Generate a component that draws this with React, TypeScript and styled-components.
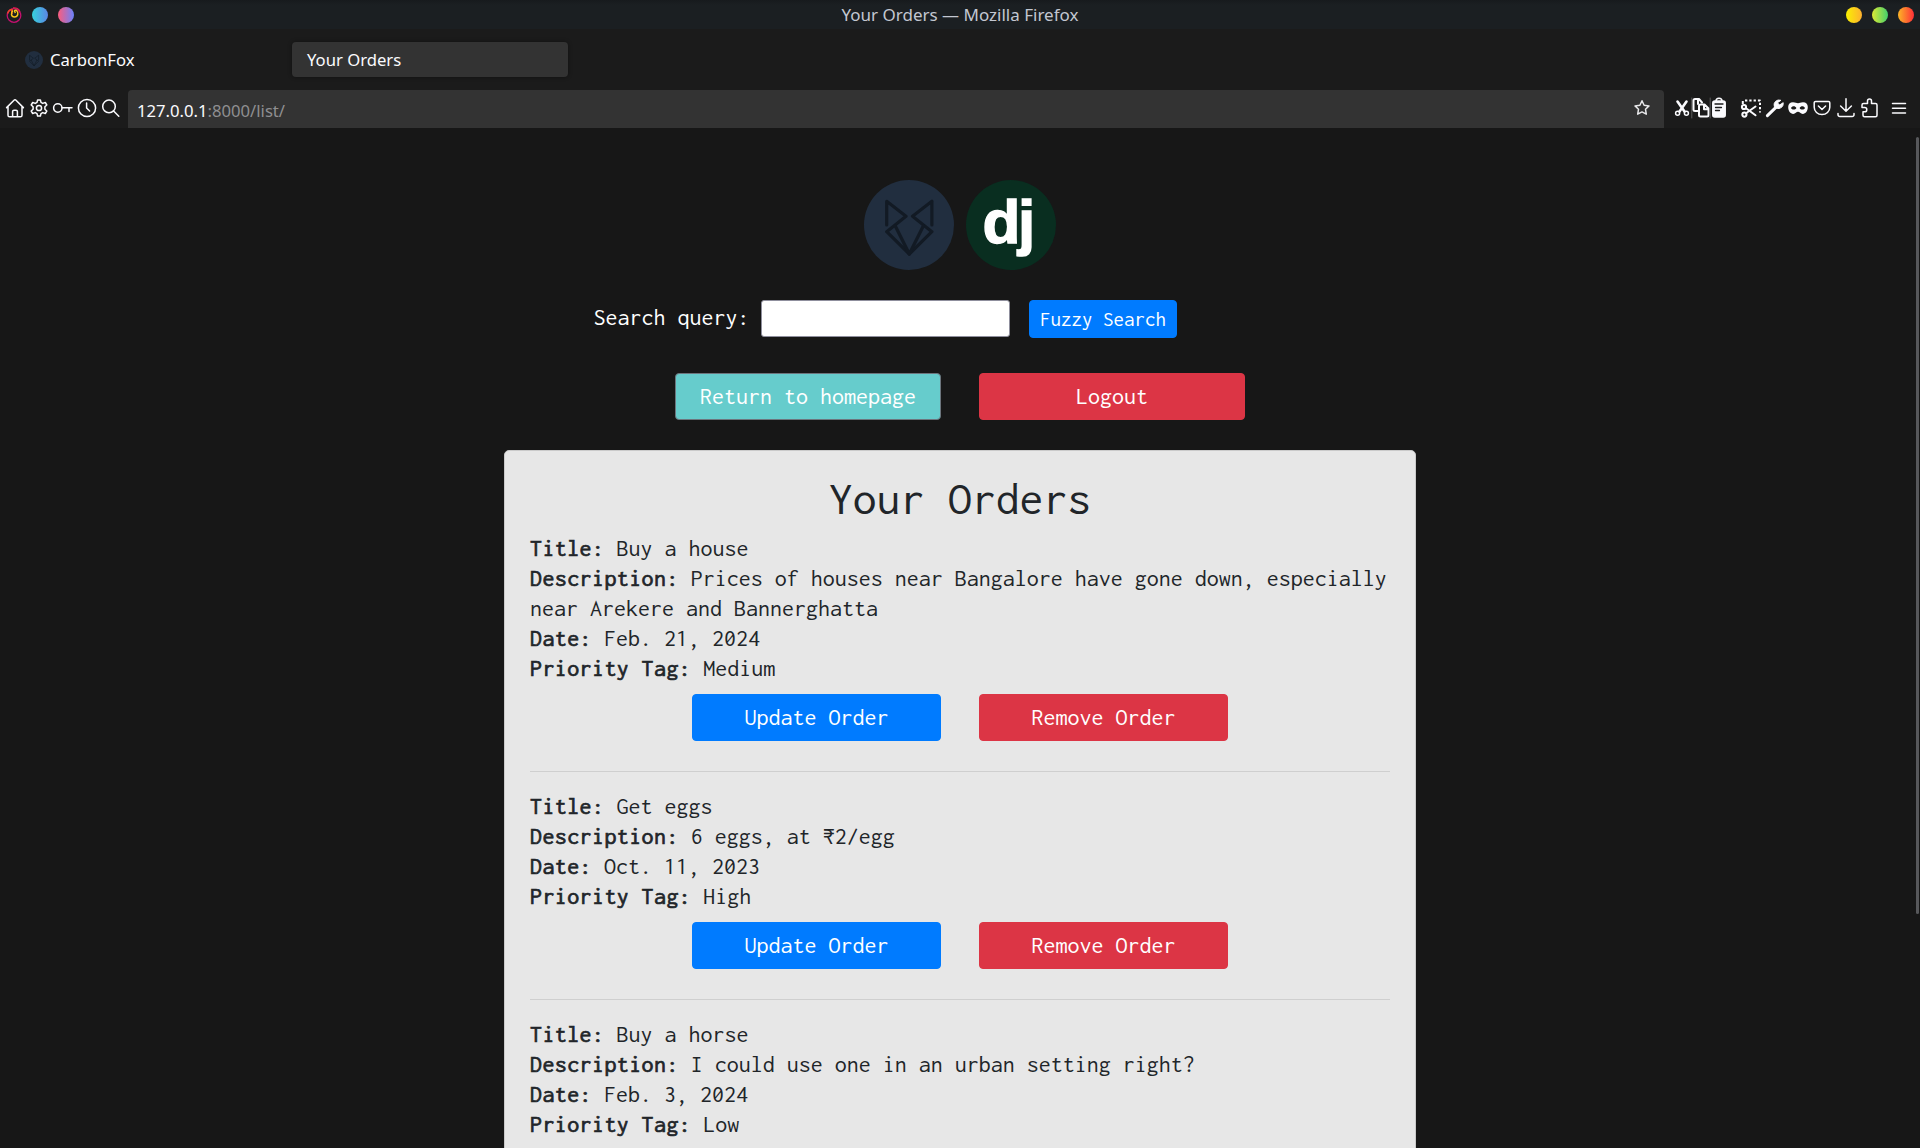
import React from 'react';
import styled, { createGlobalStyle } from 'styled-components';

const UI = '"Noto Sans", "Open Sans", sans-serif';
const MONO = 'Inconsolata, "Noto Sans Mono CJK SC", "Liberation Mono", monospace';

const Global = createGlobalStyle`
  *, *::before, *::after { box-sizing: border-box; }
  html, body { margin: 0; padding: 0; background: #171717; overflow: hidden; }
`;

const Window = styled.div`
  display: flex;
  flex-direction: column;
  width: 1920px;
  height: 1148px;
  overflow: hidden;
  background: #171717;
`;

const TitleBar = styled.header`
  display: grid;
  grid-template-columns: 1fr auto 1fr;
  align-items: center;
  height: 29px;
  padding: 0 6px;
  background: linear-gradient(#171a1d, #1b1f22 5px);
  flex: none;
`;

const TitleText = styled.div`
  font: 400 17px/28px ${UI};
  color: #c3c7d1;
  white-space: pre;
`;

const Dots = styled.div<{ $end?: boolean }>`
  display: flex;
  gap: 10px;
  justify-content: ${p => (p.$end ? 'flex-end' : 'flex-start')};
`;

const Dot = styled.span<{ $from: string; $to: string }>`
  width: 16px;
  height: 16px;
  border-radius: 50%;
  background: linear-gradient(90deg, ${p => p.$from}, ${p => p.$to});
`;

const TabStrip = styled.nav`
  display: flex;
  align-items: center;
  height: 61px;
  padding: 0 0 0 12px;
  background: #1b1b1b;
  flex: none;
`;

const Tab = styled.div<{ $active?: boolean }>`
  display: flex;
  align-items: center;
  gap: 7px;
  width: ${p => (p.$active ? 276 : 280)}px;
  height: 35px;
  padding: 0 ${p => (p.$active ? 15 : 13)}px;
  border-radius: 4px;
  background: ${p => (p.$active ? '#333333' : 'transparent')};
  box-shadow: ${p => (p.$active ? '0 0 4px rgba(0, 0, 0, 0.4)' : 'none')};
  font: 400 16.67px/35px ${UI};
  color: #fbfbfe;
`;

const Toolbar = styled.div`
  display: flex;
  height: 38px;
  padding-left: 3px;
  background: #1b1b1b;
  color: #fbfbfe;
  flex: none;
`;

const IconRow = styled.div<{ $pitch: number; $ml?: number }>`
  display: grid;
  grid-auto-flow: column;
  grid-auto-columns: ${p => p.$pitch}px;
  justify-items: center;
  align-items: center;
  height: 36px;
  margin-left: ${p => p.$ml || 0}px;
`;

const Glyph = styled.svg`
  display: block;
  width: 24px;
  height: 24px;
  overflow: visible;
  fill: none;
  stroke: currentColor;
  stroke-width: 1.5;
  stroke-linecap: round;
  stroke-linejoin: round;
`;

const UrlBar = styled.div`
  display: flex;
  align-items: center;
  justify-content: space-between;
  width: 1536px;
  height: 38px;
  margin-left: 5.5px;
  padding: 0 10px 0 9px;
  border-radius: 4px 4px 0 0;
  background: #333333;
  color: #e8e8ea;
  flex: none;
`;

const Url = styled.div`
  padding-top: 3px;
  font: 400 16.67px/33px ${UI};
  color: #fbfbfe;
  span { color: #8f8f91; }
`;

const StarSlot = styled.div`
  display: flex;
  height: 35px;
  align-self: flex-start;
  align-items: center;
`;

const Page = styled.main`
  display: grid;
  grid-template-columns: 1fr 912px 1fr;
  flex: 1;
  min-height: 0;
  font-family: ${MONO};
  font-size: 24px;
  line-height: 30px;
`;

const Content = styled.div`
  grid-column: 2;
  display: flex;
  flex-direction: column;
  align-items: center;
  padding-top: 52px;
`;

const ScrollTrack = styled.div`
  display: flex;
  justify-content: flex-end;
  padding: 9px 1px 0 0;
`;

const ScrollThumb = styled.div`
  width: 3px;
  height: 777px;
  border-radius: 2px;
  background: #57585b;
`;

const Logos = styled.div`
  display: flex;
  gap: 12px;
  height: 90px;
`;

const LogoSvg = styled.svg<{ $size: number }>`
  display: block;
  width: ${p => p.$size}px;
  height: ${p => p.$size}px;
  flex: none;
`;

const SearchForm = styled.form`
  display: flex;
  align-items: flex-start;
  align-self: flex-start;
  height: 38px;
  margin: 30px 0 0 89px;
`;

const Label = styled.label`
  width: 168px;
  padding: 2px 0 0 0.5px;
  color: #ffffff;
`;

const SearchInput = styled.input`
  width: 249px;
  height: 37px;
  margin-right: 19px;
  padding: 0 6px;
  border: 1px solid #8f8f9d;
  border-radius: 3px;
  background: #ffffff;
  font: inherit;
`;

const tones = {
  blue: ['#007bff', '#007bff'],
  red: ['#dc3545', '#dc3545'],
  teal: ['#66cccc', '#6c757d'],
};

const Button = styled.button<{ $tone: keyof typeof tones; $width: number; $small?: boolean }>`
  display: flex;
  align-items: center;
  justify-content: center;
  width: ${p => p.$width}px;
  height: ${p => (p.$small ? 38 : 47)}px;
  padding: 0 0 ${p => (p.$small ? 1 : 2)}px;
  border: 1px solid ${p => tones[p.$tone][1]};
  border-radius: 4px;
  background: ${p => tones[p.$tone][0]};
  color: #ffffff;
  font-family: ${MONO};
  font-size: ${p => (p.$small ? 21 : 24)}px;
  line-height: 30px;
`;

const ButtonRow = styled.div<{ $mt: number }>`
  display: flex;
  justify-content: center;
  gap: 38px;
  margin-top: ${p => p.$mt}px;
`;

const Card = styled.section`
  width: 912px;
  height: 760px;
  margin-top: 30px;
  padding: 24px 25px;
  border: 1px solid #cacaca;
  border-radius: 5px;
  background: #e7e7e7;
  color: #212529;
  flex: none;
`;

const Heading = styled.h1`
  margin: 0 0 12px;
  font-size: 47.7px;
  font-weight: 400;
  line-height: 46px;
  text-align: center;
`;

const Order = styled.article`
  & + & {
    margin-top: 30px;
    padding-top: 19px;
    border-top: 1px solid #cfcfcf;
  }
`;

const Field = styled.div`
  strong {
    font-weight: 400;
    letter-spacing: 0.4px;
    -webkit-text-stroke: 0.7px currentColor;
  }
`;

const HomeIcon = () => (
  <Glyph viewBox="0 0 24 24"><path d="M3.6 11.6 11 4.2a1.4 1.4 0 0 1 2 0l7.4 7.4M5 10.8v8.4a1.6 1.6 0 0 0 1.6 1.6h10.8a1.6 1.6 0 0 0 1.6-1.6v-8.4M9.6 20.6v-5a1.4 1.4 0 0 1 1.4-1.4h2a1.4 1.4 0 0 1 1.4 1.4v5" /></Glyph>
);
const GearIcon = () => (
  <Glyph viewBox="0 0 24 24">
    <path d="M10.6 4h2.8l.6 2.4 1.7 1 2.6-.9 1.5 2.5-1.9 1.8v2.4l1.9 1.8-1.5 2.5-2.6-.9-1.7 1-.6 2.4h-2.8l-.6-2.4-1.7-1-2.6.9-1.5-2.5 1.9-1.8v-2.4L4.2 9l1.5-2.5 2.6.9 1.7-1z" />
    <circle cx="12" cy="12" r="2.6" />
  </Glyph>
);
const KeyIcon = () => (
  <Glyph viewBox="0 0 24 24"><circle cx="6.8" cy="12" r="4.2" /><path d="M11 11.7h10M18 12v3.6" /></Glyph>
);
const ClockIcon = () => (
  <Glyph viewBox="0 0 24 24"><circle cx="12" cy="12" r="8.6" /><path d="M11.6 7v5l3 3" /></Glyph>
);
const SearchIcon = () => (
  <Glyph viewBox="0 0 24 24"><circle cx="10" cy="10.4" r="6.3" /><path d="m14.6 15 5.2 5.2" /></Glyph>
);
const StarIcon = () => (
  <Glyph viewBox="0 0 24 24" strokeWidth={1.3}>
    <path d="m12 4.8 2.1 4.4 4.9.7-3.5 3.4.8 4.9-4.3-2.3-4.3 2.3.8-4.9L5 9.9l4.9-.7z" />
  </Glyph>
);
const CutIcon = () => (
  <Glyph viewBox="0 0 24 24">
    <g strokeWidth="2.6"><path d="m7.5 5.5 7 10M16.5 5.5l-7 10" /></g>
    <circle cx="7.6" cy="17.2" r="2" /><circle cx="16.4" cy="17.2" r="2" />
  </Glyph>
);
const CopyIcon = () => (
  <Glyph viewBox="0 0 24 24">
    <path d="M2.8 2v20" stroke="#5b5b5b" strokeWidth="1" />
    <g strokeWidth="2">
      <path d="M9 15H6a1.5 1.5 0 0 1-1.5-1.5v-9A1.500 1.5 0 0 1 6 3h4l3 3.500M9 4v4" />
      <path d="M11.5 8.500h4l4 4V19a1.500 1.500 0 0 1-1.500 1.500h-6.500A1.500 1.500 0 0 1 10 19v-9a1.500 1.500 0 0 1 1.500-1.500zM15 9v4.200h4" />
    </g>
  </Glyph>
);
const PasteIcon = () => (
  <Glyph viewBox="0 0 24 24">
    <path d="M3.2 2v20" stroke="#5b5b5b" strokeWidth="1" />
    <rect x="5.8" y="5" width="12.4" height="16" rx="2" fill="currentColor" />
    <path d="M9 5.200a3 3 0 0 1 6 0" />
    <path d="M8 8h8M8.500 11.500h6M8.500 14.500h4" stroke="#1b1b1b" strokeWidth="1.3" />
  </Glyph>
);
const ShotIcon = () => (
  <Glyph viewBox="0 0 24 24">
    <path d="M6 4.500h15v12" strokeWidth="2" strokeDasharray="2.3 2" strokeLinecap="butt" />
    <path d="M3.800 5v3" strokeWidth="2" strokeLinecap="butt" />
    <g strokeWidth="2"><circle cx="5" cy="11" r="2.1" /><circle cx="5.4" cy="18.6" r="2.1" /><path d="m7 17.200 9.500-6.700M7 12.300l9.500 7" /></g>
  </Glyph>
);
const WrenchIcon = () => (
  <Glyph viewBox="0 0 24 24">
    <path d="m4.400 19.600 8.500-8.200" strokeWidth="3" />
    <path d="M17.600 4.200a5 5 0 0 0-6.300 6.300 5 5 0 0 0 8.700-1.200l.2-2.600-3.600 2.300-2-2z" fill="currentColor" strokeWidth="1" />
  </Glyph>
);
const MaskIcon = () => (
  <Glyph viewBox="0 0 24 24">
    <path fill="currentColor" stroke="none" fillRule="evenodd" d="M7 6.200c2.400 0 3.500 1 5 1s2.600-1 5-1c3 0 4.800 1.900 4.800 4.800 0 3.900-2.200 6.900-5 6.900-2.200 0-3.200-2.200-4.800-2.200s-2.600 2.200-4.800 2.200c-2.800 0-5-3-5-6.900 0-2.900 1.800-4.800 4.800-4.800zM5 12c1 2 4.400 2 5.400 0-1.200-2.200-4.200-2.200-5.400 0zm8.600 0c1 2 4.400 2 5.400 0-1.200-2.200-4.200-2.200-5.400 0z" />
  </Glyph>
);
const PocketIcon = () => (
  <Glyph viewBox="0 0 24 24"><path d="M5.600 5.400h12.800a1.400 1.400 0 0 1 1.400 1.400v4.400a7.800 7.400 0 0 1-15.600 0V6.800a1.400 1.400 0 0 1 1.400-1.400zM8.400 10l3.600 3.500 3.600-3.500" /></Glyph>
);
const DownloadIcon = () => (
  <Glyph viewBox="0 0 24 24"><path d="M12 2.800v12M6.600 10l5.400 5.200 5.400-5.200M4 17.400v1.400A1.800 1.800 0 0 0 5.800 20.600h12.400a1.800 1.800 0 0 0 1.800-1.800v-1.400" /></Glyph>
);
const PuzzleIcon = () => (
  <Glyph viewBox="0 0 24 24"><path d="M6.500 7.500h4V5a2 2 0 0 1 4 0v2.500h4A1.500 1.500 0 0 1 20 9v10.300a1.500 1.500 0 0 1-1.500 1.500h-11A1.500 1.500 0 0 1 6 19.300v-3.500h1.700a2 2 0 0 0 0-4.200H5V9a1.500 1.500 0 0 1 1.500-1.500z" /></Glyph>
);
const MenuIcon = () => (
  <Glyph viewBox="0 0 24 24" strokeLinecap="butt"><path d="M5.500 7.500h13M5.500 12.300h13M5.500 17h13" /></Glyph>
);

const FoxLogo = ({ size }: { size: number }) => (
  <LogoSvg $size={size} viewBox="0 0 90 90">
    <circle cx="45" cy="45" r="45" fill="#212e3f" />
    <g fill="none" stroke="#121a24" strokeWidth="3.2" strokeLinecap="round" strokeLinejoin="round">
      <path d="M22.700 45V21.300l19.300 15-19.300 15.400L45.300 74l22.600-22.300-19.400-15.400 19.400-15V45" />
      <path d="m31.300 46 14 28 14-28" />
    </g>
  </LogoSvg>
);

const DjangoLogo = () => (
  <LogoSvg $size={90} viewBox="0 0 90 90">
    <circle cx="45" cy="45" r="45" fill="#092e20" />
    <g fill="#ffffff" stroke="#ffffff" strokeWidth="1.4" fontFamily='"Liberation Sans", Arial, sans-serif' fontWeight="700" fontSize="62">
      <text x="16.5 52" y="63">dj</text>
    </g>
  </LogoSvg>
);

const FirefoxMark = () => (
  <LogoSvg $size={16} viewBox="0 0 16 16">
    <circle cx="8" cy="8.5" r="6.8" fill="none" stroke="#c4106f" strokeWidth="1.3" />
    <path d="M1.600 6.500C2.500 3 5 2.300 6 2.500 5 4 6.500 5.500 6 7" fill="none" stroke="#f0442c" strokeWidth="1.5" />
    <path d="M7 3.500C4.500 6 5 10 8.500 10S13 5.500 10.500 3.500C8.500 2.500 8 4 9.500 6" fill="none" stroke="#f8c51c" strokeWidth="1.5" />
    <path d="M7 1c3-.6 6 1 7 4" fill="none" stroke="#e01f4f" strokeWidth="1.3" />
  </LogoSvg>
);

const orders = [
  { title: 'Buy a house', description: 'Prices of houses near Bangalore have gone down, especially near Arekere and Bannerghatta', date: 'Feb. 21, 2024', tag: 'Medium', actions: true },
  { title: 'Get eggs', description: '6 eggs, at ₹2/egg', date: 'Oct. 11, 2023', tag: 'High', actions: true },
  { title: 'Buy a horse', description: 'I could use one in an urban setting right?', date: 'Feb. 3, 2024', tag: 'Low', actions: false },
];

export default function App() {
  return (
    <Window>
      <Global />
      <TitleBar>
        <Dots>
          <FirefoxMark />
          <Dot $from="#36d1dc" $to="#5b86e5" />
          <Dot $from="#fc5c7d" $to="#6a82fb" />
        </Dots>
        <TitleText>Your Orders — Mozilla Firefox</TitleText>
        <Dots $end>
          <Dot $from="#f9f002" $to="#feb02f" />
          <Dot $from="#dcea35" $to="#43cf6c" />
          <Dot $from="#fcb526" $to="#ff2f38" />
        </Dots>
      </TitleBar>
      <TabStrip>
        <Tab><FoxLogo size={18} />CarbonFox</Tab>
        <Tab $active>Your Orders</Tab>
      </TabStrip>
      <Toolbar>
        <IconRow $pitch={23.9}>
          <HomeIcon /><GearIcon /><KeyIcon /><ClockIcon /><SearchIcon />
        </IconRow>
        <UrlBar>
          <Url>127.0.0.1<span>:8000/list/</span></Url>
          <StarSlot><StarIcon /></StarSlot>
        </UrlBar>
        <IconRow $pitch={18.5} $ml={9}>
          <CutIcon /><CopyIcon /><PasteIcon />
        </IconRow>
        <IconRow $pitch={23.6} $ml={11}>
          <ShotIcon /><WrenchIcon /><MaskIcon /><PocketIcon /><DownloadIcon /><PuzzleIcon />
        </IconRow>
        <IconRow $pitch={24} $ml={5.6}><MenuIcon /></IconRow>
      </Toolbar>
      <Page>
        <Content>
          <Logos><FoxLogo size={90} /><DjangoLogo /></Logos>
          <SearchForm>
            <Label htmlFor="query">Search query:</Label>
            <SearchInput id="query" />
            <Button type="button" $tone="blue" $width={148} $small>Fuzzy Search</Button>
          </SearchForm>
          <ButtonRow $mt={35}>
            <Button $tone="teal" $width={266}>Return to homepage</Button>
            <Button $tone="red" $width={266}>Logout</Button>
          </ButtonRow>
          <Card>
            <Heading>Your Orders</Heading>
            {orders.map(o => (
              <Order key={o.title}>
                <Field><strong>Title:</strong> {o.title}</Field>
                <Field><strong>Description:</strong> {o.description}</Field>
                <Field><strong>Date:</strong> {o.date}</Field>
                <Field><strong>Priority Tag:</strong> {o.tag}</Field>
                {o.actions && (
                  <ButtonRow $mt={11}>
                    <Button $tone="blue" $width={249}>Update Order</Button>
                    <Button $tone="red" $width={249}>Remove Order</Button>
                  </ButtonRow>
                )}
              </Order>
            ))}
          </Card>
        </Content>
        <ScrollTrack><ScrollThumb /></ScrollTrack>
      </Page>
    </Window>
  );
}
